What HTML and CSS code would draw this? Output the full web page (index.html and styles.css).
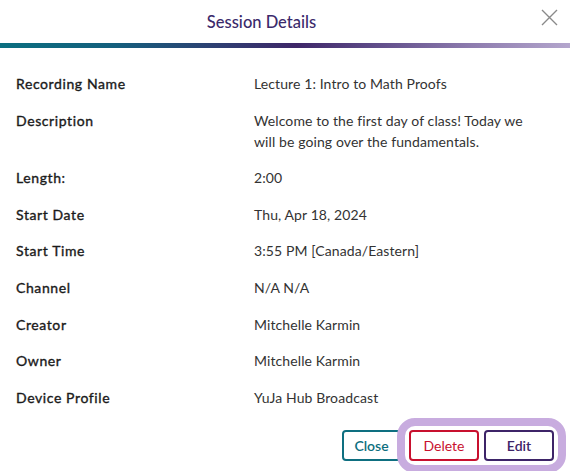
FILE: index.html
```html
<!DOCTYPE html>
<html>
<head>
<meta charset="utf-8">
<link rel="stylesheet" href="styles.css">
</head>
<body>
<div class="modal">
  <header class="modal-header">
    <h1 class="modal-title">Session Details</h1>
    <button class="close-x" aria-label="Close">
      <svg width="17" height="17" viewBox="0 0 17 17"><path d="M1 1L16 16M16 1L1 16" stroke="#8a8a8a" stroke-width="1.4" fill="none"/></svg>
    </button>
  </header>
  <div class="gradient-bar"></div>
  <dl class="details">
    <dt>Recording Name</dt><dd>Lecture 1: Intro to Math Proofs</dd>
    <dt>Description</dt><dd>Welcome to the first day of class! Today we will be going over the fundamentals.</dd>
    <dt>Length:</dt><dd>2:00</dd>
    <dt>Start Date</dt><dd>Thu, Apr 18, 2024</dd>
    <dt>Start Time</dt><dd>3:55 PM [Canada/Eastern]</dd>
    <dt>Channel</dt><dd>N/A N/A</dd>
    <dt>Creator</dt><dd>Mitchelle Karmin</dd>
    <dt>Owner</dt><dd>Mitchelle Karmin</dd>
    <dt>Device Profile</dt><dd>YuJa Hub Broadcast</dd>
  </dl>
  <footer class="modal-footer">
    <button class="btn btn-close">Close</button>
    <div class="highlight">
      <button class="btn btn-delete">Delete</button>
      <button class="btn btn-edit">Edit</button>
    </div>
  </footer>
</div>
</body>
</html>
```
FILE: styles.css
```css
* { box-sizing: border-box; }
html, body { margin: 0; padding: 0; background: #fff; }
body { font-family: Lato, "Open Sans", sans-serif; color: #2b2b2b; width: 570px; height: 471px; overflow: hidden; }
.modal { width: 570px; }
.modal-header { height: 43px; display: flex; align-items: center; justify-content: center; position: relative; padding-right: 47px; }
.modal-title { margin: 0; font-size: 16.5px; font-weight: 500; color: #3b2a6b; padding-top: 1px; }
.close-x { position: absolute; right: 12px; top: 9px; background: none; border: 0; padding: 0; width: 17px; height: 17px; cursor: pointer; }
.close-x svg { display: block; }
.gradient-bar { height: 5px; background: linear-gradient(90deg, #0b6f80 0%, #145f7d 20%, #2e3f72 38%, #3e2668 52%, #5d4a87 65%, #8c7aad 82%, #b4a6cd 100%); }
.details { margin: 0; padding: 25px 16px 0 16px; display: grid; grid-template-columns: 238px 1fr; row-gap: 15.6px; font-size: 14px; line-height: 21px; }
.details dt { font-weight: 400; color: #1a1a1a; letter-spacing: 0.6px; -webkit-text-stroke: 0.35px #1a1a1a; }
.details dd { margin: 0; color: #333; font-weight: 400; max-width: 290px; letter-spacing: 0.1px; }
.modal-footer { display: flex; justify-content: flex-end; align-items: center; padding: 10px 4px 0 0; }
.highlight { display: flex; gap: 5px; padding: 4px; border: 8px solid #c8acdf; border-radius: 18px; background: #fff; margin-left: -4px; }
.btn { font-family: Lato, "Open Sans", sans-serif; font-size: 14px; height: 31px; background: #fff; border: 2px solid; border-radius: 4px; padding: 0 10px; cursor: pointer; }
.btn-close { color: #0e6f80; border-color: #0e6f80; width: 59px; font-weight: 600; }
.btn-delete { color: #c8102e; border-color: #c8102e; width: 70px; font-weight: 400; }
.btn-edit { color: #3d2468; border-color: #3d2468; width: 70px; font-weight: 600; }
```
